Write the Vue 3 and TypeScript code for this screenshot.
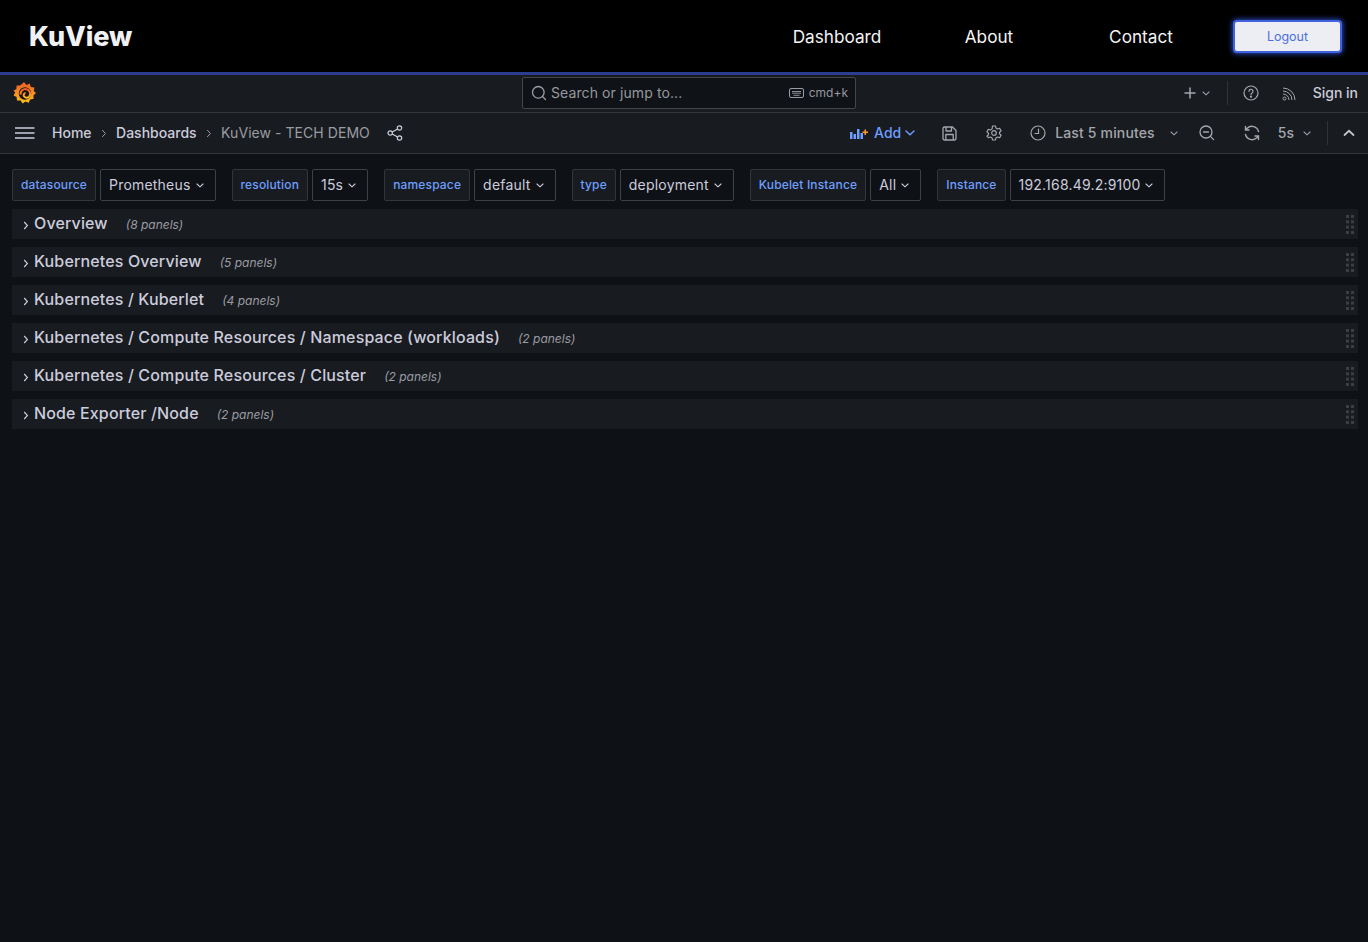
<script setup lang="ts">
interface Variable { label: string; value: string }
interface Row { title: string; panels: number }
const links: string[] = ['Dashboard', 'About', 'Contact']
const variables: Variable[] = [
  { label: 'datasource', value: 'Prometheus' },
  { label: 'resolution', value: '15s' },
  { label: 'namespace', value: 'default' },
  { label: 'type', value: 'deployment' },
  { label: 'Kubelet Instance', value: 'All' },
  { label: 'Instance', value: '192.168.49.2:9100' },
]
const rows: Row[] = [
  { title: 'Overview', panels: 8 },
  { title: 'Kubernetes Overview', panels: 5 },
  { title: 'Kubernetes / Kuberlet', panels: 4 },
  { title: 'Kubernetes / Compute Resources / Namespace (workloads)', panels: 2 },
  { title: 'Kubernetes / Compute Resources / Cluster', panels: 2 },
  { title: 'Node Exporter /Node', panels: 2 },
]
const dots: [number, number][] = [[0,0],[5,0],[0,5.3],[5,5.3],[0,10.6],[5,10.6],[0,16],[5,16]]
</script>

<template>
  <div class="page">
    <header class="site">
      <div class="brand">KuView</div>
      <nav class="links">
        <a v-for="l in links" :key="l" class="link">{{ l }}</a>
      </nav>
      <button class="logout">Logout</button>
    </header>

    <div class="bar1">
      <div class="b1-left">
        <svg class="logo" width="24" height="24" viewBox="0 0 24 24">
          <defs>
            <linearGradient id="gf" x1="0.5" y1="1" x2="0.5" y2="0">
              <stop offset="0" stop-color="#fcc21b" />
              <stop offset="1" stop-color="#ef5a28" />
            </linearGradient>
          </defs>
          <path fill="url(#gf)" d="M11 1l2.6 3 3.2-1.6 1 3.6 3.6.4-.6 3.6 2.2 2-2.6 2.4.2 3.4-3.4.6-1.6 3.4-3.2-1.400-2.800 2-2-3-3.600.2-.4-3.600-3-1.600 1.600-3.200L.4 9.800l3-1.800.2-3.600 3.400.2z" />
          <circle cx="12" cy="12.500" r="6.200" fill="#1b1410" />
          <path d="M7.600 13.500a4.800 4.800 0 1 1 8.600 2.200 3.300 3.300 0 0 1-5.200-.4 2 2 0 0 1 1.600-3.200" fill="none" stroke="url(#gf)" stroke-width="2" />
        </svg>
      </div>
      <div class="search">
        <svg class="ic" width="16" height="16" viewBox="0 0 16 16" fill="none" stroke="#9a9ca3" stroke-width="1.300"><circle cx="7.300" cy="7.300" r="5.800" /><path d="M11.500 11.500l3 3" stroke-linecap="round" /></svg>
        <span class="s-text">Search or jump to...</span>
        <svg class="kbd" width="15" height="10" viewBox="0 0 15 10" fill="none" stroke="#9a9ca3"><rect x=".5" y=".5" width="14" height="9" rx="1.500" /><path d="M3 3.500h9M3 5.200h9M4.500 7.300h6" stroke-width=".9" /></svg>
        <span class="s-key">cmd+k</span>
      </div>
      <div class="b1-right">
        <svg width="12" height="12" viewBox="0 0 12 12" stroke="#a5a7ad" stroke-width="1.500" stroke-linecap="round"><path d="M6 1v10M1 6h10" /></svg>
        <svg class="chev-s" width="8" height="5" viewBox="0 0 8 5" fill="none" stroke="#9a9ca3" stroke-width="1.100" stroke-linecap="round"><path d="M1 1l3 2.800L7 1" /></svg>
        <span class="vsep v1"></span>
        <svg class="help" width="16" height="16" viewBox="0 0 16 16" fill="none" stroke="#a5a7ad" stroke-width="1.200"><circle cx="8" cy="8" r="7" /><path d="M6 6.300a2 2 0 1 1 3 1.700c-.7.400-1 .7-1 1.500" stroke-linecap="round" /><circle cx="8" cy="11.700" r=".5" fill="#a5a7ad" /></svg>
        <svg class="rss" width="15" height="15" viewBox="0 0 15 15" fill="none" stroke="#a5a7ad" stroke-width="1"><circle cx="2.500" cy="12.500" r="1.500" /><path d="M1 8a6 6 0 0 1 6 6M1 5a9 9 0 0 1 9 9M1 2a12 12 0 0 1 12 12" /></svg>
        <span class="signin">Sign in</span>
      </div>
    </div>

    <div class="bar2">
      <svg class="burger" width="20" height="12" viewBox="0 0 20 12" stroke="#ccccdc" stroke-width="1.500"><path d="M0 1h19.500M0 6h19.500M0 11h19.500" /></svg>
      <span class="crumb">Home</span>
      <svg class="sep" width="6" height="9" viewBox="0 0 6 9" fill="none" stroke="#9b9ca3" stroke-width="1"><path d="M1.200 1l3.200 3.500-3.200 3.500" /></svg>
      <span class="crumb">Dashboards</span>
      <svg class="sep" width="6" height="9" viewBox="0 0 6 9" fill="none" stroke="#9b9ca3" stroke-width="1"><path d="M1.200 1l3.200 3.500-3.200 3.500" /></svg>
      <span class="crumb current">KuView - TECH DEMO</span>
      <svg class="share" width="16" height="16" viewBox="0 0 16 16" fill="none" stroke="#ccccdc" stroke-width="1.200"><circle cx="3.200" cy="8" r="2.200" /><circle cx="12.500" cy="3" r="2.200" /><circle cx="12.500" cy="13" r="2.200" /><path d="M5.200 7l5.400-3M5.200 9l5.400 3" /></svg>
      <div class="spacer"></div>
      <svg class="add-ic" width="18" height="11" viewBox="0 0 18 11">
        <path fill="#6e9fff" d="M0 4h2.500v7H0zM3.500 6H6v5H3.500zM7 1h2.500v10H7zM10.500 5H13v6h-2.500z" />
        <path fill="#ff9830" d="M12.500 3.500h2V1.500h1.500v2h2V5h-2v2h-1.500V5h-2z" />
      </svg>
      <span class="add">Add</span>
      <svg class="chev-add" width="10" height="6" viewBox="0 0 10 6" fill="none" stroke="#6e9fff" stroke-width="1.400" stroke-linecap="round"><path d="M1 1l4 3.800L9 1" /></svg>
      <svg class="save" width="15" height="15" viewBox="0 0 15 15" fill="none" stroke="#a5a7ad" stroke-width="1.300" stroke-linejoin="round"><path d="M1 2.500a1.500 1.500 0 0 1 1.500-1.500h8l3.500 3.500v8a1.500 1.500 0 0 1-1.500 1.500h-10A1.500 1.500 0 0 1 1 12.500z" /><path d="M4 1v4h5.500V1M3.800 14V8.500h7.400V14" /></svg>
      <svg class="gear" width="16" height="16" viewBox="0 0 16 16" fill="none" stroke="#a5a7ad" stroke-width="1.200" stroke-linejoin="round"><path d="M6.500 1h3l.4 2 1.700 1 2-.7 1.500 2.600-1.600 1.300v1.600l1.600 1.300-1.500 2.600-2-.7-1.700 1-.4 2h-3l-.4-2-1.700-1-2 .7L.9 11.100l1.600-1.300V8.200L.9 6.900l1.500-2.600 2 .7 1.700-1z" /><circle cx="8" cy="8" r="2.300" /></svg>
      <svg class="clock" width="16" height="16" viewBox="0 0 16 16" fill="none" stroke="#a5a7ad" stroke-width="1.200"><circle cx="8" cy="8" r="7" /><path d="M8.500 4v4.500H5" stroke-linecap="round" /></svg>
      <span class="range">Last 5 minutes</span>
      <svg class="chev-r" width="8" height="5" viewBox="0 0 8 5" fill="none" stroke="#9a9ca3" stroke-width="1.100" stroke-linecap="round"><path d="M1 1l3 2.800L7 1" /></svg>
      <svg class="zoom" width="16" height="16" viewBox="0 0 16 16" fill="none" stroke="#a5a7ad" stroke-width="1.300" stroke-linecap="round"><circle cx="7" cy="7" r="6" /><path d="M4.500 7h5M11.400 11.400l3.200 3.200" /></svg>
      <svg class="sync" width="16" height="16" viewBox="0 0 16 16" fill="none" stroke="#a5a7ad" stroke-width="1.400" stroke-linecap="round"><path d="M14.500 6.500A6.800 6.800 0 0 0 3.200 3.200L1.500 5M1.500 9.500a6.800 6.800 0 0 0 11.300 3.300L14.500 11M1.500 1.500V5H5M14.500 14.500V11H11" /></svg>
      <span class="refresh">5s</span>
      <svg class="chev-5" width="8" height="5" viewBox="0 0 8 5" fill="none" stroke="#9a9ca3" stroke-width="1.100" stroke-linecap="round"><path d="M1 1l3 2.800L7 1" /></svg>
      <span class="vsep v2"></span>
      <svg class="up" width="12" height="8" viewBox="0 0 12 8" fill="none" stroke="#c4c5ca" stroke-width="1.800" stroke-linecap="round"><path d="M1.500 6L6 1.800 10.500 6" /></svg>
    </div>

    <main class="content">
      <div class="vars">
        <div v-for="v in variables" :key="v.label" class="var">
          <span class="v-label"><span class="t">{{ v.label }}</span></span>
          <span class="v-value"><span class="t">{{ v.value }}</span>
            <svg width="8" height="5" viewBox="0 0 8 5" fill="none" stroke="#ccccdc" stroke-width="1.100" stroke-linecap="round"><path d="M1 1l3 2.800L7 1" /></svg>
          </span>
        </div>
      </div>
      <div class="rows">
        <div v-for="r in rows" :key="r.title" class="row">
          <svg class="r-chev" width="6" height="9" viewBox="0 0 6 9" fill="none" stroke="#ccccdc" stroke-width="1.200"><path d="M1.200 1l3.200 3.500-3.200 3.500" /></svg>
          <span class="r-title">{{ r.title }}</span>
          <span class="r-count">({{ r.panels }} panels)</span>
          <svg class="grip" width="8" height="19" viewBox="0 0 8 19" fill="#3c3e44">
            <rect v-for="(d, i) in dots" :key="i" :x="d[0]" :y="d[1]" width="3" height="3" />
          </svg>
        </div>
      </div>
    </main>
  </div>
</template>

<style>
html, body { margin: 0; background: #0e1116; }
</style>

<style scoped>
.page {
  min-height: 942px;
  background: #0e1116;
  font-family: Inter, "Liberation Sans", sans-serif;
  color: #ccccdc;
  display: flex;
  flex-direction: column;
}
.site {
  height: 72px;
  background: #000;
  display: flex;
  align-items: center;
  padding: 0 26px 0 29px;
}
.brand {
  font-family: Inter, sans-serif;
  font-weight: 800;
  font-size: 27px;
  color: #f1f1f3;
  letter-spacing: -0.1px;
  margin-right: auto;
}
.links { display: flex; gap: 48px; margin-right: 40px; }
.link {
  width: 104px;
  text-align: center;
  font-family: Inter, sans-serif;
  font-size: 17.2px;
  color: #f4f4f6;
}
.logout {
  box-sizing: border-box;
  width: 109px;
  height: 33px;
  background: #eceef4;
  border: 2px solid #4062e0;
  border-radius: 4px;
  box-shadow: 0 0 5px 1px #2a47b8;
  color: #4c6fe0;
  font-family: Inter, sans-serif;
  font-size: 12.5px;
  padding: 0;
}
.bar1 {
  box-sizing: border-box;
  height: 41px;
  background: #181b20;
  border-top: 3px solid #2c3d91;
  border-bottom: 1px solid #34363b;
  padding-bottom: 1px;
  display: grid;
  grid-template-columns: 522px 334px 1fr;
  align-items: center;
}
.b1-left { display: flex; padding-left: 13px; }
.logo { display: block; }
.search {
  box-sizing: border-box;
  height: 32px;
  background: #0f1217;
  border: 1px solid #44464c;
  border-radius: 2px;
  display: flex;
  align-items: center;
  padding: 0 7px 0 8px;
}
.s-text { margin-left: 4px; padding-bottom: 1px; font-size: 14px; letter-spacing: .1px; color: #96989e; flex: 1; }
.kbd { margin-right: 5px; }
.s-key { font-size: 12px; color: #96989e; padding-bottom: 2px; }
.b1-right {
  display: flex;
  align-items: center;
  justify-content: flex-end;
  padding-right: 10px;
}
.chev-s { margin-left: 6px; }
.vsep { width: 1px; height: 24px; background: #303238; }
.v1 { margin: 0 15px 0 17px; }
.rss { margin-left: 23px; }
.signin { margin-left: 16px; padding-bottom: 1px; font-size: 14px; font-weight: 500; color: #ccccdc; }
.bar2 {
  box-sizing: border-box;
  height: 41px;
  background: #181b20;
  border-bottom: 1px solid #34363b;
  display: flex;
  align-items: center;
  padding: 0 13px 0 15px;
  font-size: 14px;
}
.burger { margin-right: 17px; }
.crumb { font-weight: 500; color: #ccccdc; padding-bottom: 2px; }
.crumb.current { font-weight: 400; color: #9b9ca3; letter-spacing: .05px; }
.sep { margin: 0 9px 0 9.5px; }
.share { margin-left: 17px; }
.spacer { flex: 1; }
.add-ic { margin-right: 6px; }
.add { font-weight: 500; color: #6e9fff; padding-bottom: 2px; }
.chev-add { margin-left: 4px; }
.save { margin-left: 27px; }
.gear { margin-left: 29px; }
.clock { margin-left: 28px; }
.range { margin-left: 9px; font-weight: 500; color: #a5a7ad; letter-spacing: .15px; padding-bottom: 2px; }
.chev-r { margin-left: 15px; }
.zoom { margin-left: 21px; }
.sync { margin-left: 29px; }
.refresh { margin-left: 18px; font-weight: 500; color: #a5a7ad; padding-bottom: 2px; }
.chev-5 { margin-left: 9px; }
.v2 { margin: 0 15px 0 16px; }
.content { padding: 15px 10px 0 12px; }
.vars { display: flex; gap: 16px; }
.var { display: flex; gap: 4px; }
.v-label, .v-value {
  box-sizing: border-box;
  height: 32px;
  display: flex;
  align-items: center;
  border: 1px solid #33353a;
  border-radius: 2px;
}
.t { padding-bottom: 2px; }
.v-label {
  background: #181b20;
  color: #6e9fff;
  font-size: 12px;
  font-weight: 500;
  letter-spacing: .15px;
  padding: 0 8px;
}
.v-value {
  background: #0e1116;
  border-color: #3f4146;
  color: #ccccdc;
  font-size: 14px;
  letter-spacing: .2px;
  gap: 5px;
  padding: 0 11px 0 8px;
}
.rows { margin-top: 8px; display: flex; flex-direction: column; gap: 8px; }
.row {
  height: 30px;
  background: #181b20;
  display: flex;
  align-items: center;
  padding: 0 4px 0 11px;
}
.r-chev { margin-right: 5px; position: relative; top: 1px; }
.r-title { font-size: 16px; font-weight: 550; letter-spacing: .14px; color: #ccccdc; padding-bottom: 2px; }
.r-count { margin-left: 18px; font-size: 12px; font-style: italic; color: #9b9ca3; }
.grip { margin-left: auto; }
</style>
